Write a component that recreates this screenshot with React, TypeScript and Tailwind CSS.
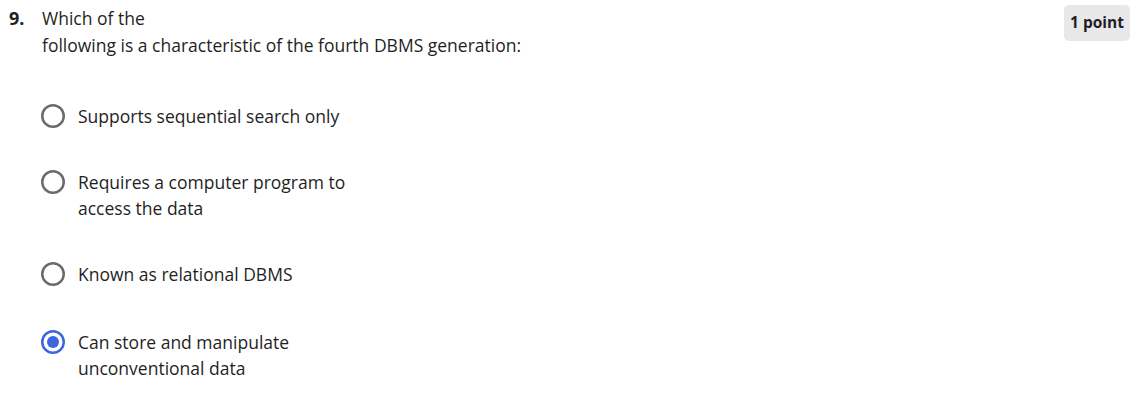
import React from "react";

const options = [
  { text: ["Supports sequential search only"], selected: false, mt: "mt-[44px]" },
  { text: ["Requires a computer program to", "access the data"], selected: false, mt: "mt-[40px]" },
  { text: ["Known as relational DBMS"], selected: false, mt: "mt-[40px]" },
  { text: ["Can store and manipulate", "unconventional data"], selected: true, mt: "mt-[42px]" },
];

function Radio({ selected }: { selected: boolean }) {
  return (
    <svg width="26" height="26" viewBox="0 0 26 26" className="shrink-0">
      <circle
        cx="13"
        cy="13"
        r="10.75"
        fill="white"
        stroke={selected ? "#3e64de" : "#6b6b6b"}
        strokeWidth="2.5"
      />
      {selected && <circle cx="13" cy="13" r="6" fill="#3e64de" />}
    </svg>
  );
}

export default function App() {
  return (
    <div
      className="w-[1144px] h-[411px] bg-white text-[#1f1f1f]"
      style={{ fontFamily: '"Open Sans", sans-serif' }}
    >
      <div className="flex pt-[5px]">
        <div className="w-[42px] pl-[9px] text-[18px] font-bold leading-[27px]">9.</div>
        <div className="flex-1 text-[17.5px] leading-[27px]">
          <div>Which of the</div>
          <div>following is a characteristic of the fourth DBMS generation:</div>
        </div>
        <div className="pr-[14px]">
          <div className="bg-[#e8e8ea] rounded-[5px] px-[6px] h-[36px] flex items-center text-[15.5px] font-bold">
            1 point
          </div>
        </div>
      </div>
      <div className="flex flex-col pl-[40px]">
        {options.map((o, i) => (
          <div key={i} className={`flex items-start gap-[12px] ${o.mt}`}>
            <Radio selected={o.selected} />
            <div className="text-[17.5px] leading-[26px] text-[#1f1f1f]">
              {o.text.map((t, j) => (
                <div key={j}>{t}</div>
              ))}
            </div>
          </div>
        ))}
      </div>
    </div>
  );
}
